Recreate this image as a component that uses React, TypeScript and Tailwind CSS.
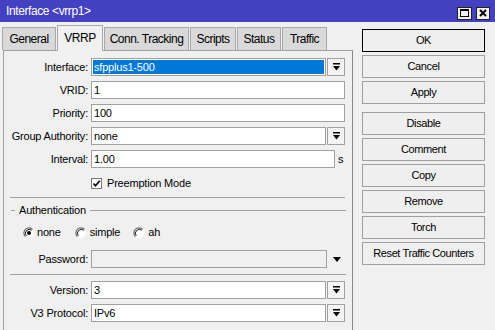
import React from "react"

const font = "font-['Liberation_Sans',Arial,sans-serif]"

const tabs = [
    { name: "General", w: "w-[54px]" },
    { name: "VRRP", w: "w-[46px]", active: true },
    { name: "Conn. Tracking", w: "w-[85px]" },
    { name: "Scripts", w: "w-[46px]" },
    { name: "Status", w: "w-[44px]" },
    { name: "Traffic", w: "w-[45px]" },
]

const DropIcon = () => (
    <svg width="7" height="8" viewBox="0 0 7 8">
        <rect x="0" y="0" width="7" height="1.5" fill="#000" />
        <path d="M0 3h7L3.5 7.5z" fill="#000" />
    </svg>
)

const DropBtn = () => (
    <div className="ml-[1px] w-[18px] h-[18px] border border-[#a0a0a0] bg-[#f4f4f4] flex items-center justify-center">
        <DropIcon />
    </div>
)

const Radio = ({ checked }: { checked?: boolean }) => (
    <svg width="12" height="12" viewBox="0 0 12 12">
        <circle cx="6" cy="6" r="5" fill="#fff" />
        <path d="M2.4 9.6A5 5 0 0 1 9.6 2.4" stroke="#6a6a6a" strokeWidth="1.2" fill="none" />
        <path d="M3.2 8.8A4 4 0 0 1 8.8 3.2" stroke="#1a1a1a" strokeWidth="1" fill="none" />
        {checked && <circle cx="6" cy="6" r="2" fill="#000" />}
    </svg>
)

const Label = ({ text }: { text: string }) => (
    <span className="w-[84px] text-right shrink-0 mr-[3px]">{text}</span>
)

const Field = ({ label, value, drop, w = "w-[254px]" }: { label: string; value: string; drop?: boolean; w?: string }) => (
    <div className="flex items-center h-[18px]">
        <Label text={label} />
        <div className={`${drop ? "w-[235px]" : w} h-[18px] border border-[#a0a0a0] bg-white flex items-center pl-[2px]`}>
            {value}
        </div>
        {drop && <DropBtn />}
    </div>
)

const buttons = ["OK", "Cancel", "Apply", "Disable", "Comment", "Copy", "Remove", "Torch", "Reset Traffic Counters"]

const App: React.FC = () => {
    return (
        <div className={`${font} w-[495px] h-[330px] bg-[#f0f0f0] overflow-hidden text-[11px] text-black tracking-[-0.2px] flex flex-col`}>
            <header className="h-[22px] bg-[#4341c2] flex items-center pl-[6px] pr-[5px] text-white text-[12px] tracking-[-0.4px]">
                <span className="flex-1">Interface &lt;vrrp1&gt;</span>
                <div className="flex gap-[4px] mt-[4px]">
                    <div className="w-[15px] h-[13px] bg-[#f0f0f0] border border-[#222] flex items-center justify-center">
                        <div className="w-[9px] h-[8px] border border-black border-t-2"></div>
                    </div>
                    <div className="w-[14px] h-[13px] bg-[#f0f0f0] border border-[#222] flex items-center justify-center">
                        <svg width="8" height="8" viewBox="0 0 8 8">
                            <path d="M1 1L7 7M7 1L1 7" stroke="#000" strokeWidth="2" />
                        </svg>
                    </div>
                </div>
            </header>

            <div className="flex flex-1">
                <div className="flex flex-col w-[353px]">
                    <div className="flex items-end h-[28px] pl-[2px] gap-[1px] text-[12px] tracking-[-0.5px]">
                        {tabs.map((t) => (
                            <div
                                key={t.name}
                                className={`${t.w} flex items-center justify-center border-t border-l border-r border-[#a8a8a8] ${
                                    t.active ? "h-[26px] -mb-px relative z-10 bg-[#f0f0f0] pb-[2px]" : "h-[23px] bg-[#d9d9d9]"
                                }`}
                            >
                                {t.name}
                            </div>
                        ))}
                    </div>

                    <div className="ml-[3px] flex-1 border-t border-l border-r border-[#a0a0a0] border-r-[#888] pt-[7px] flex flex-col">
                        <div className="flex flex-col gap-[5px]">
                            <div className="flex items-center h-[18px]">
                                <Label text="Interface:" />
                                <div className="w-[235px] h-[18px] border border-[#a0a0a0] bg-white p-[1px]">
                                    <div className="h-full bg-[#0078d7] text-white flex items-center pl-[1px]">sfpplus1-500</div>
                                </div>
                                <DropBtn />
                            </div>
                            <Field label="VRID:" value="1" />
                            <Field label="Priority:" value="100" />
                            <Field label="Group Authority:" value="none" drop />
                            <div className="flex items-center h-[18px]">
                                <Field label="Interval:" value="1.00" w="w-[244px]" />
                                <span className="ml-[3px]">s</span>
                            </div>
                        </div>

                        <div className="flex items-center h-[11px] mt-[10px] ml-[87px]">
                            <div className="w-[11px] h-[11px] border border-[#7a7a7a] bg-white flex items-center justify-center">
                                <svg width="9" height="9" viewBox="0 0 9 9">
                                    <path d="M1.5 4.5L3.5 6.8L7.8 1.8" stroke="#000" strokeWidth="1.6" fill="none" />
                                </svg>
                            </div>
                            <span className="ml-[5px]">Preemption Mode</span>
                        </div>

                        <div className="mt-[8px] ml-[6px] w-[335px] h-px bg-[#a0a0a0]"></div>

                        <div className="mt-[5px] h-[14px] flex items-center pr-[6px]">
                            <div className="ml-[7px] w-[4px] h-px bg-[#a0a0a0]"></div>
                            <span className="ml-[4px]">Authentication</span>
                            <div className="ml-[4px] flex-1 h-px bg-[#a0a0a0]"></div>
                        </div>

                        <div className="mt-[9px] h-[13px] flex items-center">
                            <div className="ml-[19px] flex items-center">
                                <Radio checked />
                                <span className="ml-[2px]">none</span>
                            </div>
                            <div className="ml-[14px] flex items-center">
                                <Radio />
                                <span className="ml-[3px]">simple</span>
                            </div>
                            <div className="ml-[13px] flex items-center">
                                <Radio />
                                <span className="ml-[3px]">ah</span>
                            </div>
                        </div>

                        <div className="mt-[11px] flex items-center h-[18px]">
                            <Label text="Password:" />
                            <div className="w-[236px] h-[18px] border border-[#a0a0a0] bg-[#f0f0f0]"></div>
                            <svg className="ml-[6px]" width="8" height="5" viewBox="0 0 8 5">
                                <path d="M0 0h8L4 5z" fill="#000" />
                            </svg>
                        </div>

                        <div className="mt-[6px] ml-[6px] w-[336px] h-px bg-[#a0a0a0]"></div>

                        <div className="mt-[6px] flex flex-col gap-[5px]">
                            <Field label="Version:" value="3" drop />
                            <Field label="V3 Protocol:" value="IPv6" drop />
                        </div>
                    </div>
                </div>

                <div className="ml-[9px] pt-[7px] flex flex-col gap-[3px]">
                    {buttons.map((b) => (
                        <button
                            key={b}
                            className={`w-[123px] h-[23px] bg-[#efefef] flex items-center justify-center tracking-[-0.4px] ${
                                b === "OK" ? "border border-black" : "border border-[#a0a0a0]"
                            } ${b === "Disable" ? "mt-[5px]" : ""}`}
                        >
                            {b}
                        </button>
                    ))}
                </div>
            </div>
        </div>
    )
}

export default App
